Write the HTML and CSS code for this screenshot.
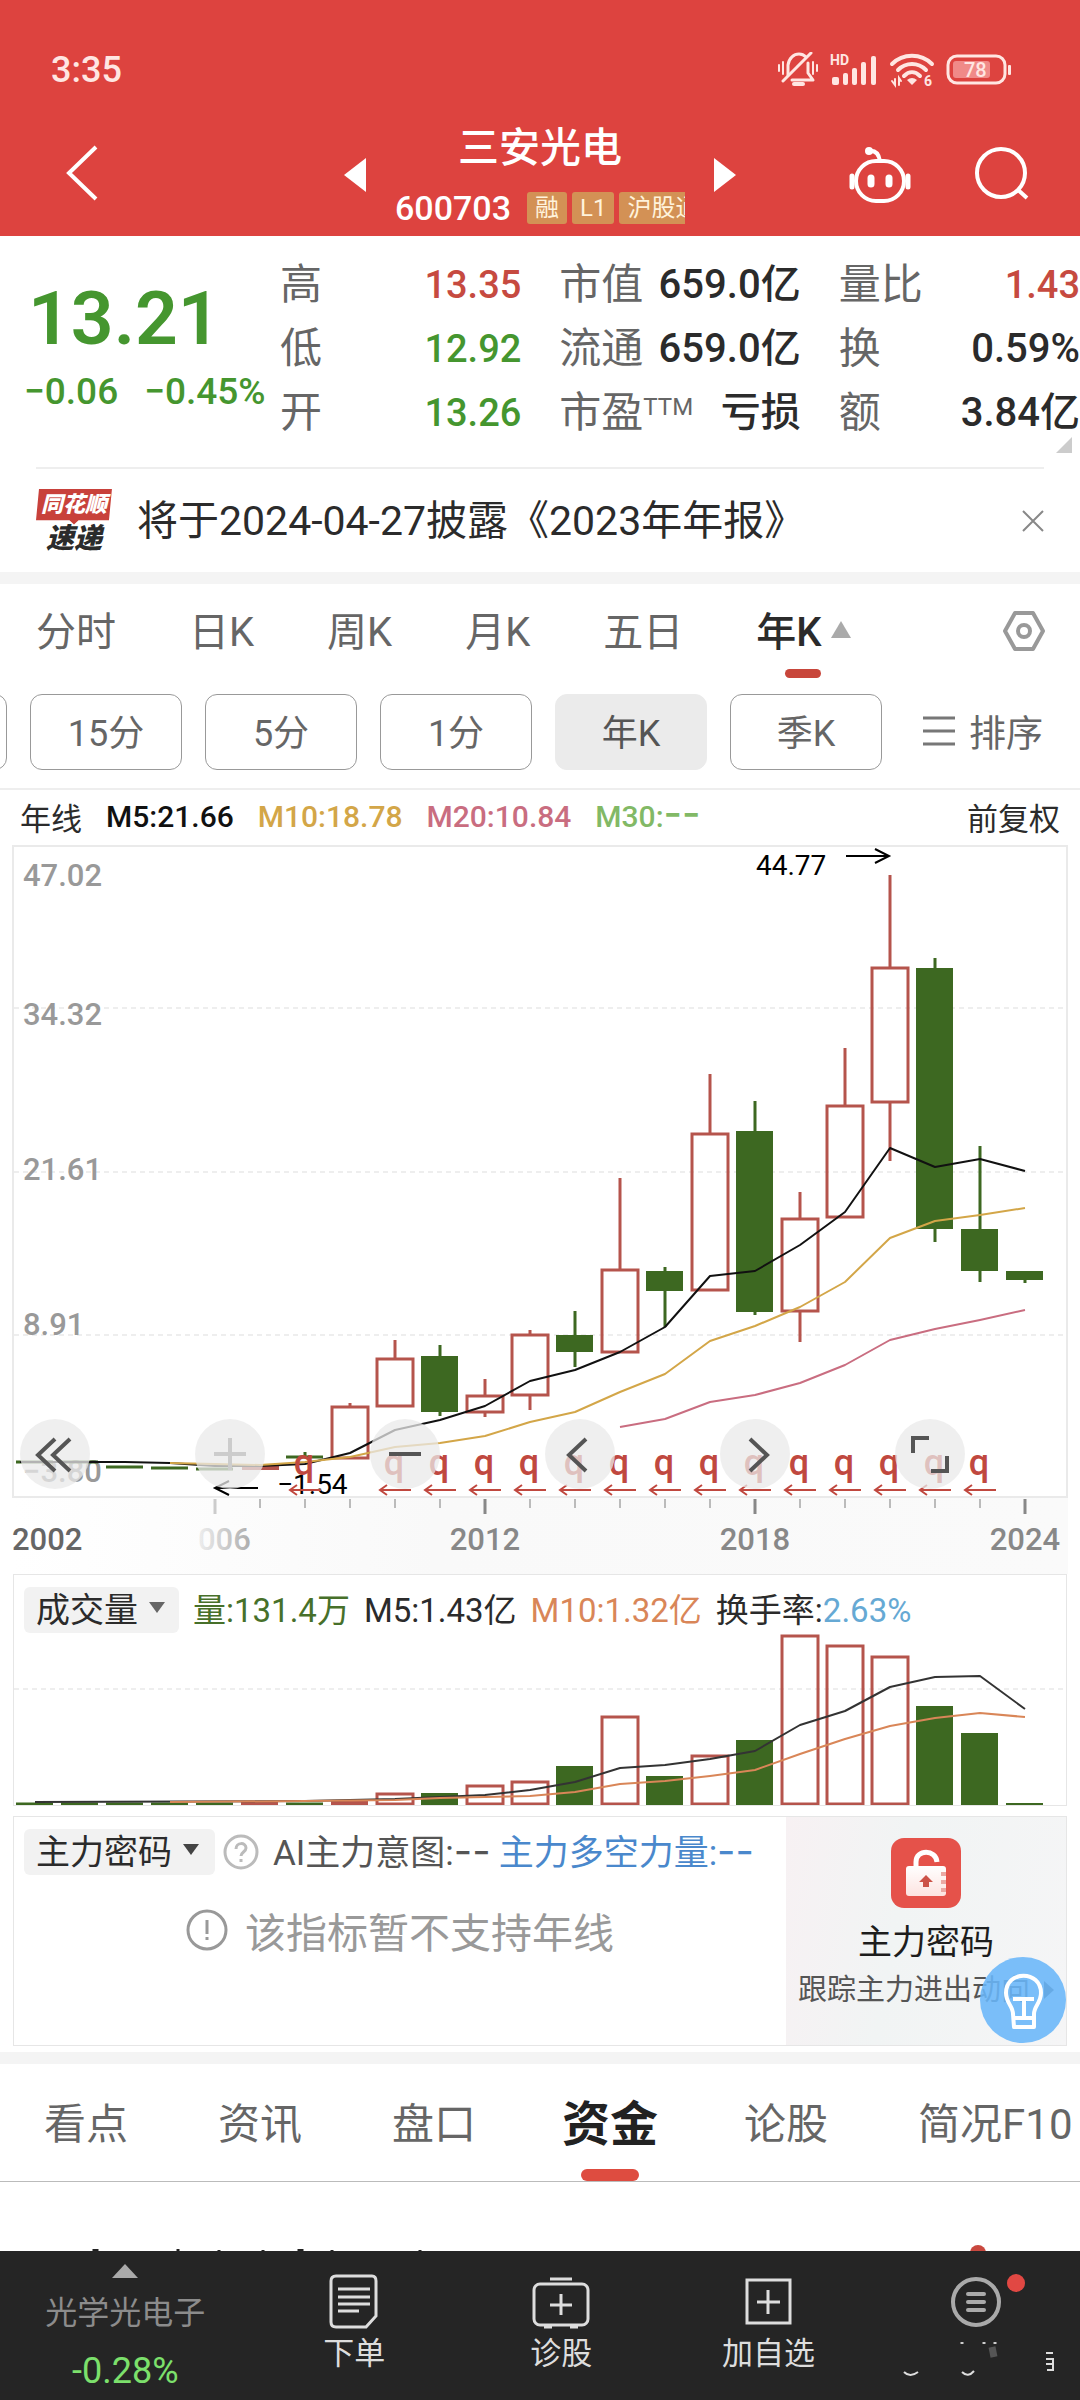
FILE: index.html
```html
<!DOCTYPE html>
<html lang="zh-CN">
<head>
<meta charset="utf-8">
<meta name="viewport" content="width=device-width, initial-scale=1">
<title>三安光电 600703</title>
<link rel="stylesheet" href="styles.css">
</head>
<body>
<header class="top">
  <div class="status">
    <time>3:35</time>
    <div class="status-icons">
      <svg width="42" height="36" viewBox="0 0 42 36" fill="none" stroke="#ffe6e2" stroke-width="3" stroke-linecap="round" stroke-linejoin="round" aria-hidden="true"><path d="M11 23V13C12 6 17 2 22 2C25 2 27 3 29 5M31 11V21L36 28H15"/><path d="M34 1L6 29"/><path d="M17 32H26" stroke-width="4"/><path d="M2 13V19M6 10V22M36 10V22M40 13V19" stroke-width="2"/></svg>
      <svg class="signal" width="48" height="34" viewBox="0 0 48 34" fill="#ffe6e2" aria-hidden="true"><rect x="2" y="24" width="7" height="8" rx="2"/><rect x="13" y="20" width="5" height="12" rx="2"/><rect x="22" y="15" width="5" height="17" rx="2"/><rect x="31" y="9" width="5" height="23" rx="2"/><rect x="41" y="3" width="5" height="29" rx="2"/><text x="0" y="12" class="hd">HD</text></svg>
      <svg width="46" height="36" viewBox="0 0 46 36" fill="none" stroke="#ffe6e2" stroke-width="4" stroke-linecap="round" aria-hidden="true"><path d="M3 12C14 1 32 1 43 12M9 18C17 10 29 10 37 18M15 24C20 19 26 19 31 24"/><path d="M18 28Q23 24 28 28L23 33Z" fill="#ffe6e2" stroke="none"/><path d="M3 29L6 33V27M10 33V26L12 29" stroke-width="2"/><text x="35" y="34" class="hd" stroke="none">6</text></svg>
      <svg width="66" height="32" viewBox="0 0 66 32" aria-hidden="true"><rect x="2" y="2" width="57" height="27" rx="9" fill="none" stroke="#ffe6e2" stroke-width="3"/><rect x="7" y="7" width="37" height="17" rx="3" fill="#f08a88"/><rect x="62" y="11" width="3" height="10" rx="1" fill="#ffe6e2"/><text x="18" y="23" class="pct">78</text></svg>
    </div>
  </div>
  <div class="nav">
    <button class="icon-btn back" aria-label="返回"><svg width="32" height="56" viewBox="0 0 32 56" fill="none" stroke="#fff" stroke-width="4"><path d="M30 2L3 28L30 54"/></svg></button>
    <div class="stock">
      <button class="icon-btn" aria-label="上一只"><svg width="22" height="34" viewBox="0 0 22 34" fill="#fff"><path d="M22 0V34L0 17Z"/></svg></button>
      <div class="stock-id">
        <h1>三安光电</h1>
        <div class="code"><span class="code-num">600703</span><span class="tags"><span class="tag">融</span><span class="tag">L1</span><span class="tag">沪股通</span></span></div>
      </div>
      <button class="icon-btn" aria-label="下一只"><svg width="22" height="34" viewBox="0 0 22 34" fill="#fff"><path d="M0 0V34L22 17Z"/></svg></button>
    </div>
    <div class="actions">
      <button class="icon-btn" aria-label="助手"><svg width="62" height="56" viewBox="0 0 62 56" fill="none" stroke="#fff" stroke-width="4"><rect x="7" y="14" width="48" height="40" rx="20"/><path d="M20 4C27 3 30 8 31 14"/><circle cx="20" cy="4" r="4" fill="#fff" stroke="none"/><path d="M22 31V37M40 31V37" stroke-width="7" stroke-linecap="round"/><path d="M3 29V40M59 29V40" stroke-width="5" stroke-linecap="round"/></svg></button>
      <button class="icon-btn" aria-label="搜索"><svg width="54" height="54" viewBox="0 0 54 54" fill="none" stroke="#fff" stroke-width="4"><circle cx="26" cy="26" r="24"/><path d="M42 42L52 51"/></svg></button>
    </div>
  </div>
</header>

<main>
  <section class="quote">
    <div class="price">
      <div class="last">13.21</div>
      <div class="change"><span>−0.06</span><span>−0.45%</span></div>
    </div>
    <dl class="stats">
      <div><dt>高</dt><dd class="up">13.35</dd></div>
      <div><dt>低</dt><dd class="down">12.92</dd></div>
      <div><dt>开</dt><dd class="down">13.26</dd></div>
    </dl>
    <dl class="stats">
      <div><dt>市值</dt><dd>659.0亿</dd></div>
      <div><dt>流通</dt><dd>659.0亿</dd></div>
      <div><dt>市盈<sup>TTM</sup></dt><dd>亏损</dd></div>
    </dl>
    <dl class="stats">
      <div><dt>量比</dt><dd class="up">1.43</dd></div>
      <div><dt>换</dt><dd>0.59%</dd></div>
      <div><dt>额</dt><dd>3.84亿</dd></div>
    </dl>
    <svg class="corner" width="16" height="16" viewBox="0 0 16 16" aria-hidden="true"><path d="M16 0V16H0Z" fill="#ccc"/></svg>
  </section>

  <section class="notice">
    <div class="brand"><span class="brand-top">同花顺</span><span class="brand-bottom">速递</span></div>
    <a href="#report">将于2024-04-27披露《2023年年报》</a>
    <button class="icon-btn close" aria-label="关闭"><svg width="22" height="22" viewBox="0 0 22 22" stroke="#888" stroke-width="2"><path d="M1 1L21 21M21 1L1 21"/></svg></button>
  </section>

  <div class="band"></div>

  <nav class="periods">
    <button>分时</button><button>日K</button><button>周K</button><button>月K</button><button>五日</button><button class="on">年K<svg width="20" height="17" viewBox="0 0 20 17" aria-hidden="true"><path d="M10 0L20 17H0Z" fill="#aaa"/></svg></button>
    <button class="settings" aria-label="设置"><svg width="44" height="42" viewBox="0 0 44 42" fill="none" stroke="#999" stroke-width="4" stroke-linejoin="round"><path d="M13 3H31L41 21L31 39H13L3 21Z"/><circle cx="22" cy="21" r="6"/></svg></button>
  </nav>

  <div class="minutes">
    <div class="pill" aria-hidden="true"></div>
    <button class="pill">15分</button><button class="pill">5分</button><button class="pill">1分</button><button class="pill sel">年K</button><button class="pill">季K</button>
    <button class="sort"><svg width="32" height="30" viewBox="0 0 32 30" stroke="#777" stroke-width="3" aria-hidden="true"><path d="M0 2H32M0 15H32M0 28H32"/></svg>排序</button>
  </div>

  <div class="ma">
    <span class="name">年线</span><span class="m5">M5:21.66</span><span class="m10">M10:18.78</span><span class="m20">M20:10.84</span><span class="m30">M30:<span class="dash">--</span></span><button class="adjust">前复权</button>
  </div>

  <section class="kline">
    <svg class="chart" viewBox="0 842 1080 732" role="img" aria-label="年K线图">
      <defs>
        <linearGradient id="axis"><stop offset="0" stop-color="#fff"/><stop offset=".4" stop-color="#f9f9f9"/><stop offset="1" stop-color="#fafafa"/></linearGradient>
        <linearGradient id="fade" gradientUnits="userSpaceOnUse" x1="196" y1="0" x2="262" y2="0"><stop offset="0" stop-color="#888" stop-opacity=".1"/><stop offset="1" stop-color="#888" stop-opacity=".8"/></linearGradient>
        <g id="q"><text class="q" text-anchor="middle" x="-1" y="1475">q</text><path d="M16 1490H-14M-8 1485L-15 1490L-8 1495" fill="none" stroke="#c0483f" stroke-width="2"/></g>
      </defs>
      <rect x="13" y="1498" width="1055" height="76" fill="url(#axis)"/>
      <rect x="13" y="846" width="1054" height="651" fill="none" stroke="#eaeaea" stroke-width="2"/>
      <path d="M14 1008H1066M14 1172H1066M14 1335H1066" stroke="#ddd" stroke-dasharray="5 4"/>
      <g class="scale"><text x="23" y="886">47.02</text><text x="23" y="1025">34.32</text><text x="23" y="1180">21.61</text><text x="23" y="1335">8.91</text><text x="23" y="1482">−3.80</text></g>
      <g class="up-candle">
        <path d="M350 1403V1407M395 1340V1359M485 1379V1396M485 1412V1417M530 1330V1335M530 1395V1410M620 1178V1270M710 1074V1134M800 1192V1219M800 1312V1342M845 1048V1106M890 875V968M890 1102V1161"/>
        <rect x="332" y="1407" width="36" height="51"/><rect x="377" y="1359" width="36" height="47"/><rect x="467" y="1396" width="36" height="16"/><rect x="512" y="1335" width="36" height="60"/><rect x="602" y="1270" width="36" height="82"/><rect x="692" y="1134" width="36" height="156"/><rect x="782" y="1219" width="36" height="92"/><rect x="827" y="1106" width="36" height="111"/><rect x="872" y="968" width="36" height="134"/>
        <path d="M242 1468H279" stroke-width="4"/>
      </g>
      <g class="down-candle">
        <path d="M440 1345V1416M575 1311V1367M665 1267V1327M755 1101V1315M935 958V1242M980 1146V1282M1025 1271V1283M305 1452V1458M16 1462H53M61 1462H98M106 1467H143M151 1468H188M196 1469H233M286 1457H323"/>
        <rect x="421" y="1356" width="37" height="56"/><rect x="556" y="1335" width="37" height="17"/><rect x="646" y="1271" width="37" height="20"/><rect x="736" y="1131" width="37" height="181"/><rect x="916" y="968" width="37" height="261"/><rect x="961" y="1229" width="37" height="42"/><rect x="1006" y="1271" width="37" height="9"/>
      </g>
      <g class="lines">
        <path stroke="#111" d="M20 1462L125 1462L170 1463L215 1466L260 1466L305 1464L350 1453L395 1430L440 1420L485 1406L530 1381L575 1370L620 1352L665 1327L710 1276L755 1271L800 1245L845 1212L890 1148L935 1167L980 1159L1025 1171"/>
        <path stroke="#d3a648" d="M170 1463L215 1464L260 1465L305 1462L350 1457L395 1447L440 1443L485 1436L530 1422L575 1412L620 1392L665 1374L710 1341L755 1326L800 1307L845 1282L890 1238L935 1221L980 1215L1025 1208"/>
        <path stroke="#c96d80" d="M620 1427L665 1419L710 1402L755 1395L800 1383L845 1365L890 1340L935 1329L980 1320L1025 1310"/>
      </g>
      <g class="mark"><text x="756" y="875">44.77</text><path d="M846 856H888M875 849L889 856L875 863"/><text x="277" y="1494">−1.54</text><path d="M258 1488H216M229 1481L215 1488L229 1495"/></g>
      <use href="#q" x="305"/><use href="#q" x="395"/><use href="#q" x="440"/><use href="#q" x="485"/><use href="#q" x="530"/><use href="#q" x="575"/><use href="#q" x="620"/><use href="#q" x="665"/><use href="#q" x="710"/><use href="#q" x="755"/><use href="#q" x="800"/><use href="#q" x="845"/><use href="#q" x="890"/><use href="#q" x="935"/><use href="#q" x="980"/>
      <path d="M260 1499V1508M305 1499V1508M350 1499V1508M395 1499V1508M440 1499V1508M530 1499V1508M575 1499V1508M620 1499V1508M665 1499V1508M710 1499V1508M800 1499V1508M845 1499V1508M890 1499V1508M935 1499V1508M980 1499V1508" stroke="#bbb" stroke-width="2"/>
      <path d="M485 1499V1514M755 1499V1514M1025 1499V1514" stroke="#888" stroke-width="3"/><path d="M215 1499V1514" stroke="#ccc" stroke-width="3"/>
      <g class="years"><text x="12" y="1550" fill="#666">2002</text><text x="198" y="1550" fill="url(#fade)">006</text><text x="485" y="1550" text-anchor="middle">2012</text><text x="755" y="1550" text-anchor="middle">2018</text><text x="1025" y="1550" text-anchor="middle">2024</text></g>
    </svg>
    <div class="tools">
      <button aria-label="最早"><svg viewBox="0 0 70 70"><path d="M35 20L18 36L35 52M50 20L33 36L50 52"/></svg></button>
      <button aria-label="放大" disabled><svg viewBox="0 0 70 70"><path d="M19 35H51M35 19V51"/></svg></button>
      <button aria-label="缩小"><svg viewBox="0 0 70 70"><path d="M19 35H51"/></svg></button>
      <button aria-label="左移"><svg viewBox="0 0 70 70"><path d="M41 20L24 36L41 52"/></svg></button>
      <button aria-label="右移"><svg viewBox="0 0 70 70"><path d="M30 20L47 36L30 52"/></svg></button>
      <button aria-label="全屏"><svg viewBox="0 0 70 70"><path d="M18 34V19H34M52 37V52H36"/></svg></button>
    </div>
  </section>

  <section class="panel">
    <div class="legend">
      <button class="chip">成交量<svg width="16" height="11" viewBox="0 0 16 11" aria-hidden="true"><path d="M0 0H16L8 11Z" fill="#666"/></svg></button>
      <span class="vol">量:131.4万</span><span>M5:1.43亿</span><span class="vm10">M10:1.32亿</span><span class="turnover">换手率:<span class="rate">2.63%</span></span>
    </div>
    <svg class="chart" viewBox="14 1632 1052 173" role="img" aria-label="成交量图">
      <path d="M14 1689H1066" stroke="#ddd" stroke-dasharray="5 4"/>
      <g class="up-candle"><rect x="377" y="1794" width="36" height="10"/><rect x="467" y="1786" width="36" height="18"/><rect x="512" y="1782" width="36" height="22"/><rect x="602" y="1717" width="36" height="87"/><rect x="692" y="1756" width="36" height="48"/><rect x="782" y="1636" width="36" height="168"/><rect x="827" y="1646" width="36" height="158"/><rect x="872" y="1657" width="36" height="147"/><path d="M241 1803H278M331 1803H368" stroke-width="4"/></g>
      <g class="down-candle"><rect x="421" y="1793" width="37" height="12"/><rect x="556" y="1766" width="37" height="39"/><rect x="646" y="1776" width="37" height="29"/><rect x="736" y="1740" width="37" height="65"/><rect x="916" y="1706" width="37" height="99"/><rect x="961" y="1733" width="37" height="72"/><path d="M16 1804H53M61 1804H98M106 1804H143M151 1804H188M196 1804H233M286 1804H323"/><rect x="1006" y="1803" width="37" height="2"/></g>
      <g class="lines">
        <path stroke="#333" d="M35 1802L305 1801L350 1800L395 1799L440 1797L485 1795L530 1790L575 1782L620 1768L665 1765L710 1759L755 1751L800 1725L845 1711L890 1687L935 1677L980 1676L1025 1709"/>
        <path stroke="#d98658" d="M170 1802L305 1801L395 1800L440 1798L485 1797L530 1796L575 1792L620 1784L665 1781L710 1776L755 1770L800 1754L845 1739L890 1726L935 1718L980 1713L1025 1717"/>
      </g>
    </svg>
  </section>

  <section class="panel code-panel">
    <div class="code-main">
      <div class="legend">
        <button class="chip">主力密码<svg width="16" height="11" viewBox="0 0 16 11" aria-hidden="true"><path d="M0 0H16L8 11Z" fill="#444"/></svg></button>
        <svg class="help" width="36" height="36" viewBox="0 0 36 36" aria-hidden="true"><circle cx="18" cy="18" r="16" fill="none" stroke="#bbb" stroke-width="3"/><path d="M13 15C13 8 23 8 23 14C23 18 18 18 18 22M18 25V28" fill="none" stroke="#bbb" stroke-width="3"/></svg>
        <span class="intent">AI主力意图:<span class="dash">--</span></span><span class="force">主力多空力量:<span class="dash">--</span></span>
      </div>
      <p class="empty"><svg width="42" height="42" viewBox="0 0 42 42" fill="none" stroke="#999" stroke-width="3" aria-hidden="true"><circle cx="21" cy="21" r="19"/><path d="M21 11V25M21 28V31"/></svg>该指标暂不支持年线</p>
    </div>
    <aside class="promo">
      <svg width="70" height="70" viewBox="0 0 70 70" aria-hidden="true"><defs><linearGradient id="lock" x2="0" y2="1"><stop offset="0" stop-color="#fff"/><stop offset="1" stop-color="#fde3e0"/></linearGradient></defs><rect width="70" height="70" rx="13" fill="#e5524a"/><path d="M25 30V24C25 11 45 11 46 24" fill="none" stroke="#fff" stroke-width="5"/><rect x="15" y="28" width="40" height="30" rx="3" fill="url(#lock)"/><path d="M35 37L42 44H38V49H32V44H28Z" fill="#cc5248"/><path d="M50 34H55V38H50ZM50 42H55V46H50ZM50 50H55V54H50Z" fill="#eba9a4"/></svg>
      <strong>主力密码</strong>
      <a href="#promo">跟踪主力进出动向<svg width="10" height="18" viewBox="0 0 10 18" aria-hidden="true"><path d="M0 0L10 9L0 18Z" fill="#555"/></svg></a>
      <button class="bulb" aria-label="提示"><svg width="86" height="86" viewBox="0 0 86 86" fill="none" stroke="#fff" stroke-width="4" stroke-linejoin="round"><path d="M33 57C33 49 26 46 26 36C26 13 61 13 61 36C61 46 54 49 54 57V70H34Z"/><path d="M33 42H54M44 42V60M35 61H53"/></svg></button>
    </aside>
  </section>

  <div class="band"></div>

  <nav class="tabs">
    <button>看点</button><button>资讯</button><button>盘口</button><button class="on">资金</button><button>论股</button><button>简况F10</button>
  </nav>
  <div class="peek">
    <svg viewBox="0 0 1080 6" aria-hidden="true"><path d="M94 6V4M97 6V4M178 6V4M219 6V5M263 6V5M299 6V4M302 6V4M332 6V5M420 6V5" stroke="#222" stroke-width="3"/><circle cx="978" cy="8" r="8" fill="#c9483f"/></svg>
  </div>
</main>

<footer class="bar">
  <button class="sector"><svg width="26" height="14" viewBox="0 0 26 14" aria-hidden="true"><path d="M13 0L26 14H0Z" fill="#aaa"/></svg><span>光学光电子</span><span class="sector-chg">-0.28%</span></button>
  <button><svg width="58" height="58" viewBox="0 0 58 58" fill="none" stroke="#ddd" stroke-width="3" aria-hidden="true"><path d="M11 3H47Q51 3 51 8V43L41 54H11Q6 54 6 49V8Q6 3 11 3Z"/><path d="M13 16H45M13 24H45M13 31H45M13 38H34"/></svg>下单</button>
  <button><svg width="58" height="58" viewBox="0 0 58 58" fill="none" stroke="#ddd" stroke-width="3" aria-hidden="true"><rect x="2" y="11" width="54" height="41" rx="6"/><path d="M18 6H40M12 54H20M38 54H46M29 21V42M18 32H40"/></svg>诊股</button>
  <button><svg width="58" height="58" viewBox="0 0 58 58" fill="none" stroke="#ddd" stroke-width="3" aria-hidden="true"><rect x="8" y="7" width="43" height="43"/><path d="M29 17V41M18 29H41"/></svg>加自选</button>
  <button class="more" aria-label="更多"><svg width="208" height="112" viewBox="0 0 208 112" fill="none" aria-hidden="true"><circle cx="104" cy="29" r="23" stroke="#aaa" stroke-width="4"/><path d="M96 21H112M96 29H112M96 37H112" stroke="#aaa" stroke-width="4" stroke-linecap="round"/><circle cx="144" cy="10" r="9" fill="#e14843"/><path d="M32 99Q38 105 46 99M90 99Q96 105 102 98M174 80H181M174 86H181V97H175M174 91H181" stroke="#ddd" stroke-width="2"/><path d="M120 74L122 84" stroke="#555" stroke-width="7"/><path d="M90 69V71M112 69V71M123 69V71" stroke="#ccc" stroke-width="3"/></svg></button>
</footer>
</body>
</html>
```
FILE: styles.css
```css
* { box-sizing: border-box; }
body {
  margin: 0;
  min-height: 100vh;
  display: flex;
  flex-direction: column;
  overflow-x: hidden;
  background: #fff;
  color: #2b2b2b;
  font-family: Roboto, "Noto Sans CJK SC", sans-serif;
}
main { flex: 1; display: flex; flex-direction: column; }
button {
  margin: 0;
  padding: 0;
  border: 0;
  background: none;
  color: inherit;
  font: inherit;
  white-space: nowrap;
}
a { color: inherit; text-decoration: none; }
svg { display: block; flex: none; }
h1, p, dl, dd { margin: 0; }

/* header */
.top { background: #dd433f; color: #fff; padding: 48px 0 12px; }
.status {
  display: flex;
  justify-content: space-between;
  align-items: center;
  height: 44px;
  padding: 0 68px 0 51px;
  color: #ffe6e2;
  font-size: 36px;
  font-weight: 500;
}
.status-icons { display: flex; align-items: center; gap: 11px; }
.hd { font-size: 14px; font-weight: 700; fill: #ffe6e2; }
.pct { font-size: 20px; font-weight: 500; fill: #ffe6e2; }
.nav {
  display: grid;
  grid-template-columns: 1fr auto 1fr;
  align-items: center;
  margin-top: 26px;
  height: 106px;
}
.icon-btn { display: flex; }
.back { padding: 0 0 4px 66px; }
.stock { display: flex; align-items: center; justify-content: space-between; width: 392px; }
.stock-id { display: flex; flex-direction: column; align-items: center; padding-bottom: 8px; }
h1 { font-size: 41px; font-weight: 500; line-height: 60px; }
.code { display: flex; align-items: center; gap: 16px; margin-top: 14px; }
.code-num { font-size: 34px; font-weight: 500; line-height: 32px; }
.tags { display: flex; gap: 5px; width: 158px; overflow: hidden; }
.tag {
  flex: none;
  padding: 0 8px;
  border-radius: 3px;
  background: #d39155;
  color: #fff3dc;
  font-size: 24px;
  line-height: 32px;
}
.actions { display: flex; justify-content: flex-end; gap: 64px; padding-right: 51px; }

/* quote */
.quote { position: relative; display: flex; gap: 38px; padding: 17px 0 22px; }
.price { width: 242px; flex: none; padding-top: 27px; color: #45962f; white-space: nowrap; }
.last { padding-left: 28px; font-size: 75px; font-weight: 600; line-height: 76px; }
.change { display: flex; gap: 26px; margin-top: 12px; padding-left: 24px; font-size: 37px; font-weight: 500; line-height: 48px; }
.stats { flex: 1; min-width: 0; }
.stats div { display: flex; justify-content: space-between; height: 64px; line-height: 64px; white-space: nowrap; }
.stats dt { color: #666; font-size: 42px; }
.stats dd { font-size: 40px; font-weight: 500; }
.stats .up { color: #c64a40; font-size: 38px; }
.stats .down { color: #45962f; font-size: 38px; }
.stats sup { font-size: 24px; line-height: 1; vertical-align: 12px; }
.corner { position: absolute; right: 8px; bottom: 14px; }

/* notice */
.notice {
  display: flex;
  align-items: center;
  height: 105px;
  margin: 0 36px;
  border-top: 2px solid #eee;
  font-size: 41px;
}
.notice a { flex: 1; padding: 0 0 8px 25px; }
.brand { display: flex; flex-direction: column; align-items: center; width: 76px; font-weight: 900; font-style: italic; }
.brand-top {
  width: 100%;
  height: 36px;
  background: #c8413b;
  color: #fff;
  clip-path: polygon(4% 0, 100% 0, 96% 88%, 56% 88%, 50% 100%, 44% 88%, 0 88%);
  font-size: 22px;
  line-height: 31px;
  text-align: center;
}
.brand-bottom { font-size: 28px; line-height: 28px; }
.band { height: 12px; background: #f4f4f4; }

/* period tabs */
.periods { display: flex; align-items: center; gap: 73px; height: 94px; padding: 0 34px 0 36px; color: #666; font-size: 40px; }
.periods button { position: relative; display: flex; align-items: center; gap: 9px; height: 94px; padding-bottom: 4px; }
.periods .on { color: #2b2b2b; font-weight: 500; }
.periods .on::after, .tabs .on::after {
  content: "";
  position: absolute;
  left: 50%;
  bottom: 0;
  width: 36px;
  height: 9px;
  margin-left: -18px;
  border-radius: 5px;
  background: #c8463b;
}
.periods .settings { margin-left: auto; padding-bottom: 0; }

.minutes { display: flex; gap: 23px; margin-top: 16px; padding-bottom: 18px; overflow: hidden; color: #666; font-size: 36px; border-bottom: 2px solid #eee; }
.pill { flex: none; width: 152px; height: 76px; padding-bottom: 4px; border: 1px solid #999; border-radius: 12px; }
.pill:first-child { margin-left: -145px; }
.pill.sel { background: #ebebeb; border-color: #ebebeb; color: #555; }
.sort { display: flex; align-items: center; gap: 14px; margin-left: 18px; padding-bottom: 3px; font-size: 37px; }

.ma { display: flex; align-items: center; gap: 24px; height: 52px; padding: 0 20px; font-size: 30px; font-weight: 500; }
.ma .name, .adjust { font-size: 31px; font-weight: 400; }
.m5 { color: #111; }
.m10 { color: #d3a648; }
.m20 { color: #c96d80; }
.m30 { color: #82b966; }
.adjust { margin-left: auto; }
.dash { font-family: Inter, sans-serif; font-size: 40px; line-height: 30px; }

/* charts */
.kline { position: relative; }
.chart { width: 100%; height: auto; }
.chart text { font-size: 30px; font-weight: 500; }
.chart .scale text { fill: #999; font-size: 31px; }
.chart .years text { font-size: 31px; }
.years { fill: #888; }
.chart .mark text { font-size: 28px; font-weight: 400; fill: #000; }
.mark path { fill: none; stroke: #000; stroke-width: 2; }
.chart .q { font-size: 36px; fill: #c0483f; }
.up-candle { fill: none; stroke: #b5544c; stroke-width: 3; }
.down-candle { fill: #3d6821; }
.down-candle path { stroke: #3d6821; stroke-width: 3; }
.lines { fill: none; stroke-width: 2; stroke-linejoin: round; }
.tools {
  position: absolute;
  left: 20px;
  right: 115px;
  bottom: 85px;
  display: flex;
  justify-content: space-between;
}
.tools button { width: 70px; height: 70px; border-radius: 50%; background: rgba(234, 234, 234, .75); }
.tools path { fill: none; stroke: #555; stroke-width: 4; }
.tools button:disabled path { stroke: #ccc; }

.panel { margin: 0 13px; border: 1px solid #e6e6e6; }
.legend { display: flex; align-items: center; gap: 14px; height: 57px; padding: 8px 0 0 10px; font-size: 33px; white-space: nowrap; }
.chip { display: flex; align-items: center; gap: 11px; height: 46px; margin-top: 4px; padding: 0 14px 4px 12px; border-radius: 6px; background: #f2f2f2; font-size: 34px; }
.vol { color: #47702a; }
.vm10 { color: #d98658; }
.rate { color: #66a9d4; }

.code-panel { display: flex; margin-top: 10px; height: 230px; }
.code-main { flex: 1; }
.code-main .legend { gap: 8px; font-size: 35px; }
.code-main .chip { padding-right: 16px; }
.help { margin-top: 4px; }
.intent { padding-left: 6px; color: #555; }
.force { color: #4a88cc; }
.empty { display: flex; align-items: center; justify-content: center; gap: 17px; height: 116px; padding-bottom: 4px; color: #999; font-size: 41px; }
.promo {
  position: relative;
  display: flex;
  flex-direction: column;
  align-items: center;
  width: 280px;
  padding-top: 21px;
  background: linear-gradient(100deg, #f7f1f3, #f1f4f4 40%, #f5f5f6);
}
.promo strong { margin-top: 10px; color: #1d1d1d; font-size: 34px; font-weight: 400; line-height: 48px; }
.promo a { display: flex; align-items: center; gap: 14px; color: #555; font-size: 29px; line-height: 48px; white-space: nowrap; }
.bulb { position: absolute; right: 0; bottom: 2px; width: 86px; height: 86px; border-radius: 50%; background: rgba(105, 182, 249, .88); }

/* lower tabs */
.code-panel + .band { margin-top: 6px; }
.tabs { display: flex; align-items: center; gap: 90px; height: 118px; padding-left: 44px; overflow: hidden; border-bottom: 1px solid #bbb; color: #666; font-size: 42px; }
.tabs button { position: relative; height: 117px; padding-bottom: 5px; flex: none; }
.tabs .on { margin: 0 -4px; color: #222; font-size: 48px; font-weight: 700; }
.tabs .on::after { width: 58px; height: 12px; margin-left: -29px; border-radius: 6px; background: #de4c40; }
.peek { flex: 1; display: flex; align-items: flex-end; min-height: 69px; }
.peek svg { width: 100%; }

/* bottom bar */
.bar { display: grid; grid-template-columns: 23fr repeat(4, 19fr); height: 149px; background: #252525; color: #ddd; font-size: 31px; }
.bar button { display: flex; flex-direction: column; align-items: center; padding-top: 22px; line-height: 46px; }
.bar .sector { padding-top: 13px; color: #8c8c8c; font-size: 32px; line-height: 48px; }
.sector span { margin-top: 11px; }
.bar .sector-chg { color: #7ce06c; font-size: 36px; margin-top: 10px; }
```
